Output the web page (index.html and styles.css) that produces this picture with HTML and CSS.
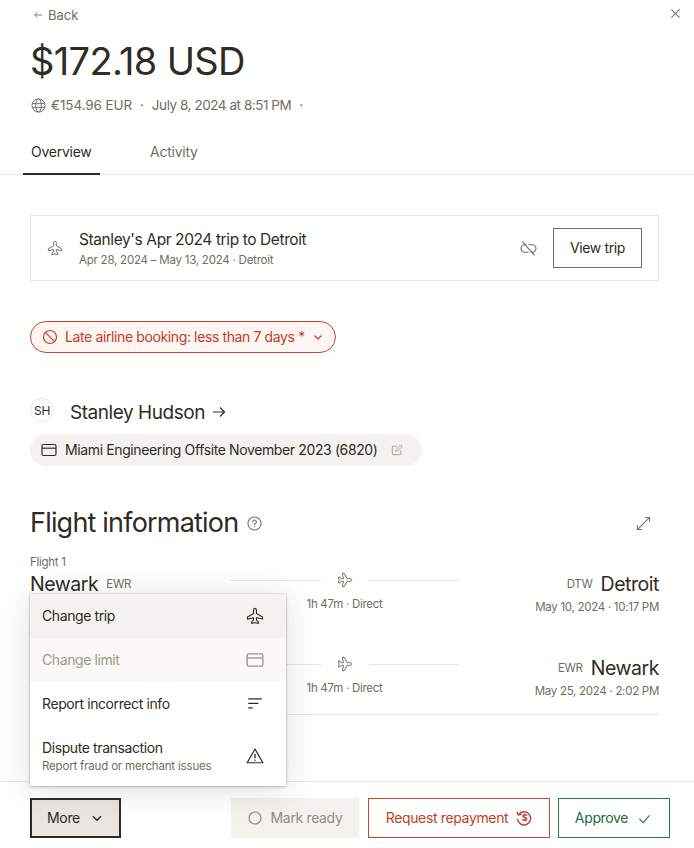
FILE: index.html
```html
<!DOCTYPE html>
<html lang="en">
<head>
<meta charset="utf-8">
<title>Transaction</title>
<link rel="stylesheet" href="styles.css">
</head>
<body>
<svg class="defs" width="0" height="0" aria-hidden="true">
  <symbol id="plane" viewBox="0 0 16 16"><path d="M8 1.2c.8 0 1.3.9 1.3 1.9v2.7l5.4 3v1.9L9.3 9.5v2.2l1.6 1.3v1.7L8 13.8l-2.9.9V13l1.6-1.3V9.5l-5.4 1.3V8.8l5.4-3V3.1c0-1 .5-1.9 1.3-1.9z" fill="none" stroke="currentColor" stroke-width="1" stroke-linejoin="round"/></symbol>
  <symbol id="card" viewBox="0 0 16 16"><rect x="1" y="2.5" width="14" height="11" rx="1.5" fill="none" stroke="currentColor" stroke-width="1.2"/><path d="M1 6.2h14" stroke="currentColor" stroke-width="1.2"/></symbol>
  <symbol id="chev" viewBox="0 0 12 12"><path d="M2.5 4.5 6 8l3.5-3.5" fill="none" stroke="currentColor" stroke-width="1.2"/></symbol>
</svg>
<div class="page">
  <main class="main">
    <div class="topbar">
      <a class="back"><svg class="ic-back" viewBox="0 0 12 12"><path d="M11 6H2M5.5 2.5 2 6l3.5 3.5" fill="none" stroke="currentColor" stroke-width="1"/></svg>Back</a>
      <svg class="ic-close" viewBox="0 0 12 12"><path d="M1.5 1.5l9 9M10.5 1.5l-9 9" stroke="currentColor" stroke-width="1.1"/></svg>
    </div>
    <h1 class="amount">$172.18 USD</h1>
    <div class="meta">
      <svg class="ic-globe" viewBox="0 0 16 16"><g fill="none" stroke="currentColor" stroke-width="1"><circle cx="8" cy="8" r="7"/><ellipse cx="8" cy="8" rx="3" ry="7"/><path d="M1.2 6h13.6M1.2 10h13.6"/></g></svg>
      <span>€154.96 EUR</span><span class="dot">·</span><span class="meta-date">July 8, 2024 at 8:51 PM</span><span class="dot">·</span>
    </div>
    <nav class="tabs">
      <a class="tab active">Overview</a>
      <a class="tab">Activity</a>
    </nav>
    <section class="trip">
      <svg class="ic16 muted"><use href="#plane"/></svg>
      <div class="trip-text">
        <div class="trip-title">Stanley's Apr 2024 trip to Detroit</div>
        <div class="small muted trip-sub">Apr 28, 2024 – May 13, 2024 · Detroit</div>
      </div>
      <svg class="ic-unlink muted" viewBox="0 0 16 16"><g fill="none" stroke="currentColor" stroke-width="1.1"><path d="M6 4.5H4.5a3.5 3.5 0 0 0 0 7H8M10 11.5h1.5a3.5 3.5 0 0 0 0-7H8"/><path d="M2.2 1.5 13.8 14.5"/></g></svg>
      <button class="view-trip">View trip</button>
    </section>
    <div class="pill">
      <svg class="ic16" viewBox="0 0 16 16"><g fill="none" stroke="currentColor" stroke-width="1.2"><circle cx="8" cy="8" r="6.5"/><path d="M3.4 3.4l9.2 9.2"/></g></svg>
      <span>Late airline booking: less than 7 days *</span>
      <svg class="ic-chev"><use href="#chev"/></svg>
    </div>
    <div class="person">
      <span class="avatar">SH</span>
      <span class="name">Stanley Hudson</span>
      <svg class="ic-arrow" viewBox="0 0 14 14"><path d="M1 7h11.5M8 2.5 12.5 7 8 11.5" fill="none" stroke="currentColor" stroke-width="1.2"/></svg>
    </div>
    <div class="chip">
      <svg class="ic16"><use href="#card"/></svg>
      <span>Miami Engineering Offsite November 2023 (6820)</span>
      <svg class="ic-edit" viewBox="0 0 14 14"><g fill="none" stroke="currentColor" stroke-width="1.1"><path d="M7 2.5H2.5a1 1 0 0 0-1 1v8a1 1 0 0 0 1 1h8a1 1 0 0 0 1-1V7"/><path d="M5.5 8.5 6 6.3 11.3 1l1.7 1.7L7.7 8z"/></g></svg>
    </div>
    <div class="section-head">
      <h2 class="section-title">Flight information</h2>
      <svg class="ic-help muted" viewBox="0 0 16 16"><circle cx="8" cy="8" r="7" fill="none" stroke="currentColor" stroke-width="1.1"/><path d="M6 6.3a2 2 0 1 1 3 1.7c-.7.4-1 .8-1 1.5" fill="none" stroke="currentColor" stroke-width="1.1"/><circle cx="8" cy="11.5" r=".7" fill="currentColor"/></svg>
      <svg class="ic-expand muted" viewBox="0 0 16 16"><path d="M1.5 14.5l13-13M9.5 1.5h5v5M1.5 9.5v5h5" fill="none" stroke="currentColor" stroke-width="1.1"/></svg>
    </div>
    <div class="flight-label small muted">Flight 1</div>
    <div class="flight">
      <div class="airport"><span class="city">Newark</span><span class="code">EWR</span></div>
      <div class="route">
        <div class="route-line"><svg class="ic-plane-side muted"><use href="#plane"/></svg></div>
        <div class="small muted">1h 47m · Direct</div>
      </div>
      <div class="dest">
        <div class="airport"><span class="code">DTW</span><span class="city">Detroit</span></div>
        <div class="small muted">May 10, 2024 · 10:17 PM</div>
      </div>
    </div>
    <div class="flight second">
      <div class="airport"></div>
      <div class="route">
        <div class="route-line"><svg class="ic-plane-side muted"><use href="#plane"/></svg></div>
        <div class="small muted">1h 47m · Direct</div>
      </div>
      <div class="dest">
        <div class="airport"><span class="code">EWR</span><span class="city">Newark</span></div>
        <div class="small muted">May 25, 2024 · 2:02 PM</div>
      </div>
    </div>
    <div class="divider"></div>
  </main>
  <footer class="footer">
    <button class="btn more"><span>More</span><svg class="ic-chev-l"><use href="#chev"/></svg></button>
    <div class="actions">
      <button class="btn ready"><svg class="ic14" viewBox="0 0 14 14"><circle cx="7" cy="7" r="6" fill="none" stroke="currentColor" stroke-width="1.2"/></svg><span>Mark ready</span></button>
      <button class="btn repay"><span>Request repayment</span><svg class="ic16" viewBox="0 0 16 16"><g fill="none" stroke="currentColor" stroke-width="1.4"><path d="M2.6 4.6A6.6 6.6 0 1 1 1.4 8.8"/><path d="M1 1.8 2.2 5l3.4-.6"/></g><text x="8.6" y="11.4" class="repay-sign">$</text></svg></button>
      <button class="btn approve"><span>Approve</span><svg class="ic-check" viewBox="0 0 14 14"><path d="M1.5 7.5 5.5 11.5 12.5 3.5" fill="none" stroke="currentColor" stroke-width="1.1"/></svg></button>
    </div>
  </footer>
  <div class="menu">
    <div class="menu-item hover"><span>Change trip</span><svg class="ic18"><use href="#plane"/></svg></div>
    <div class="menu-item disabled"><span>Change limit</span><svg class="ic18"><use href="#card"/></svg></div>
    <div class="menu-item"><span>Report incorrect info</span><svg class="ic18" viewBox="0 0 16 16"><path d="M2 3.5h12M2 7.5h9M2 11.5h4" stroke="currentColor" stroke-width="1.2"/></svg></div>
    <div class="menu-item tall"><div><div>Dispute transaction</div><div class="small muted">Report fraud or merchant issues</div></div><svg class="ic18" viewBox="0 0 16 16"><path d="M8 1.8 15 14H1z" fill="none" stroke="currentColor" stroke-width="1.1" stroke-linejoin="round"/><path d="M8 6v4" stroke="currentColor" stroke-width="1.2"/><circle cx="8" cy="11.8" r=".7" fill="currentColor"/></svg></div>
  </div>
</div>
</body>
</html>
```
FILE: styles.css
```css
* { box-sizing: border-box; }
html, body { margin: 0; padding: 0; background: #fff; }
body { font-family: Inter, "Liberation Sans", sans-serif; color: #2e2c24; font-size: 14px; }
.defs { position: absolute; }
svg { display: block; flex: none; }
.muted { color: #6f6e61; }
.small { font-size: 11.5px; line-height: 16px; letter-spacing: -0.28px; }
.page { position: relative; width: 694px; height: 848px; display: flex; flex-direction: column; overflow: hidden; }
.main { flex: 1; min-height: 0; overflow: hidden; display: flex; flex-direction: column; }
.topbar { height: 30px; padding: 7px 13px 0 33px; display: flex; justify-content: space-between; align-items: flex-start; }
.back { display: flex; align-items: center; gap: 5px; height: 16px; font-size: 13px; color: #6f6e61; }
.ic-back { width: 10px; height: 10px; }
.ic-close { width: 11px; height: 11px; color: #6f6e61; margin-top: 1px; }
.amount { margin: 7px 0 0 30px; font-size: 38px; line-height: 48px; font-weight: 400; letter-spacing: -0.64px; color: #2e2c24; }
.meta { margin: 10px 0 0 31px; height: 20px; display: flex; align-items: center; font-size: 13.5px; letter-spacing: -0.1px; color: #6f6e61; }
.meta-date { letter-spacing: -0.45px; }
.ic-globe { width: 15px; height: 15px; margin-right: 5px; }
.dot { margin: 0 8px; }
.tabs { margin-top: 19px; height: 41px; border-bottom: 1px solid #e8e7e3; padding-left: 23px; display: flex; gap: 41px; }
.tab { width: 77px; padding: 8px 0 0 8px; font-size: 14px; line-height: 20px; color: #6f6e61; height: 41px; letter-spacing: -0.25px; }
.tab.active { color: #2e2c24; border-bottom: 2px solid #2e2c24; }
.tab + .tab { width: auto; padding-left: 9px; }
.trip { margin: 40px 35px 0 30px; height: 66px; border: 1px solid #e8e7e3; padding: 0 16px; display: flex; align-items: center; }
.trip .ic16 { margin-right: 16px; }
.ic16 { width: 16px; height: 16px; }
.ic14 { width: 14px; height: 14px; }
.ic18 { width: 18px; height: 18px; }
.trip-text { flex: 1; padding-top: 2px; }
.trip-title { font-size: 15.5px; line-height: 20px; letter-spacing: -0.4px; }
.trip-sub { margin-top: 2px; letter-spacing: -0.23px; }
.ic-unlink { width: 17px; height: 17px; margin-right: 16px; }
.view-trip { width: 89px; height: 40px; padding: 0 0 2px; background: #fff; border: 1px solid #6f6e61; font: inherit; font-size: 14px; color: #2e2c24; letter-spacing: -0.4px; }
.pill { margin: 40px 0 0 30px; width: 306px; height: 32px; border: 1px solid #c8462c; border-radius: 16px; background: #fff6f3; color: #bd3f23; display: flex; align-items: center; padding-left: 11px; gap: 7px; font-size: 14px; letter-spacing: -0.38px; white-space: nowrap; }
.pill span, .chip span { margin-bottom: 2px; }
.ic-chev { width: 12px; height: 12px; }
.person { margin: 45px 0 0 30px; height: 24px; display: flex; align-items: center; }
.avatar { width: 24px; height: 24px; border: 1px solid #e8e7e3; border-radius: 50%; font-size: 12px; display: flex; align-items: center; justify-content: center; margin-right: 16px; letter-spacing: -0.3px; }
.name { font-size: 19px; letter-spacing: -0.45px; margin-top: 4px; }
.ic-arrow { width: 14px; height: 14px; margin: 4px 0 0 7px; }
.chip { margin: 12px 0 0 30px; width: 392px; height: 32px; background: #f3f2ee; border-radius: 16px; display: flex; align-items: center; padding-left: 11px; gap: 8px; font-size: 14px; letter-spacing: -0.38px; white-space: nowrap; }
.ic-edit { width: 12px; height: 12px; color: #a5a593; margin-left: 5px; }
.section-head { margin: 39px 0 0 30px; padding-right: 43px; height: 36px; display: flex; align-items: center; }
.section-title { margin: 0; font-size: 27px; line-height: 36px; font-weight: 400; letter-spacing: -0.8px; }
.ic-help { width: 15px; height: 15px; margin-left: 9px; }
.ic-expand { width: 15px; height: 15px; margin-left: auto; }
.flight-label { margin: 13px 0 0 30px; }
.flight { margin: 0 35px 0 30px; height: 48px; display: flex; }
.flight.second { margin-top: 36px; }
.airport { display: flex; align-items: center; gap: 8px; height: 28px; }
.flight > .airport { width: 200px; }
.city { font-size: 19.5px; line-height: 28px; letter-spacing: -0.45px; }
.code { font-size: 11.5px; color: #6f6e61; letter-spacing: -0.28px; }
.route { width: 229px; text-align: center; margin-top: -2px; }
.route-line { height: 24px; display: flex; align-items: center; justify-content: center; margin-bottom: 4px; }
.route-line::before, .route-line::after { content: ""; flex: 1; height: 1px; background: #e8e7e3; }
.ic-plane-side { width: 16px; height: 16px; margin: 0 16px; transform: rotate(90deg); }
.dest { flex: 1; text-align: right; }
.dest .airport { justify-content: flex-end; }
.dest .small { margin-top: 1px; }
.divider { margin: 12px 35px 0 30px; height: 1px; background: #e8e7e3; }
.footer { height: 67px; border-top: 1px solid #e8e7e3; padding: 16px 24px 9px 30px; display: flex; justify-content: space-between; background: #fff; }
.btn { height: 40px; padding: 0; font: inherit; font-size: 14px; letter-spacing: -0.35px; display: flex; align-items: center; justify-content: center; background: #fff; border: 1px solid; }
.btn span { margin-bottom: 2px; }
.more { width: 91px; border: 2px solid #2e2c24; background: #e9e5e1; color: #2e2c24; gap: 10px; }
.ic-chev-l { width: 14px; height: 14px; }
.actions { display: flex; gap: 8px; }
.ready { width: 128px; background: #f3f2ee; border-color: #f3f2ee; color: #8f8f7d; gap: 9px; margin-right: 1px; }
.repay { width: 182px; border-color: #c8462c; color: #bd3f23; gap: 8px; }
.repay-sign { font-size: 9px; font-weight: 700; fill: currentColor; text-anchor: middle; }
.approve { width: 112px; padding-right: 2px; border-color: #2a7a47; color: #226b3c; gap: 10px; }
.ic-check { width: 13px; height: 13px; }
.menu { position: absolute; left: 30px; top: 594px; width: 256px; background: #fff; box-shadow: 0 0 1px rgba(40,40,30,.35), 0 1px 3px rgba(40,40,30,.25), 0 4px 32px rgba(40,40,30,.14); }
.menu-item { height: 44px; padding: 0 22px 0 12px; display: flex; align-items: center; justify-content: space-between; font-size: 14px; letter-spacing: -0.4px; }
.menu-item > span { margin-bottom: 2px; }
.menu-item.hover { background: #f3f2ee; }
.menu-item.disabled { background: #faf9f7; color: #999988; }
.menu-item.tall { height: 60px; }
.menu-item .small { margin-top: 2px; letter-spacing: -0.18px; }
```
